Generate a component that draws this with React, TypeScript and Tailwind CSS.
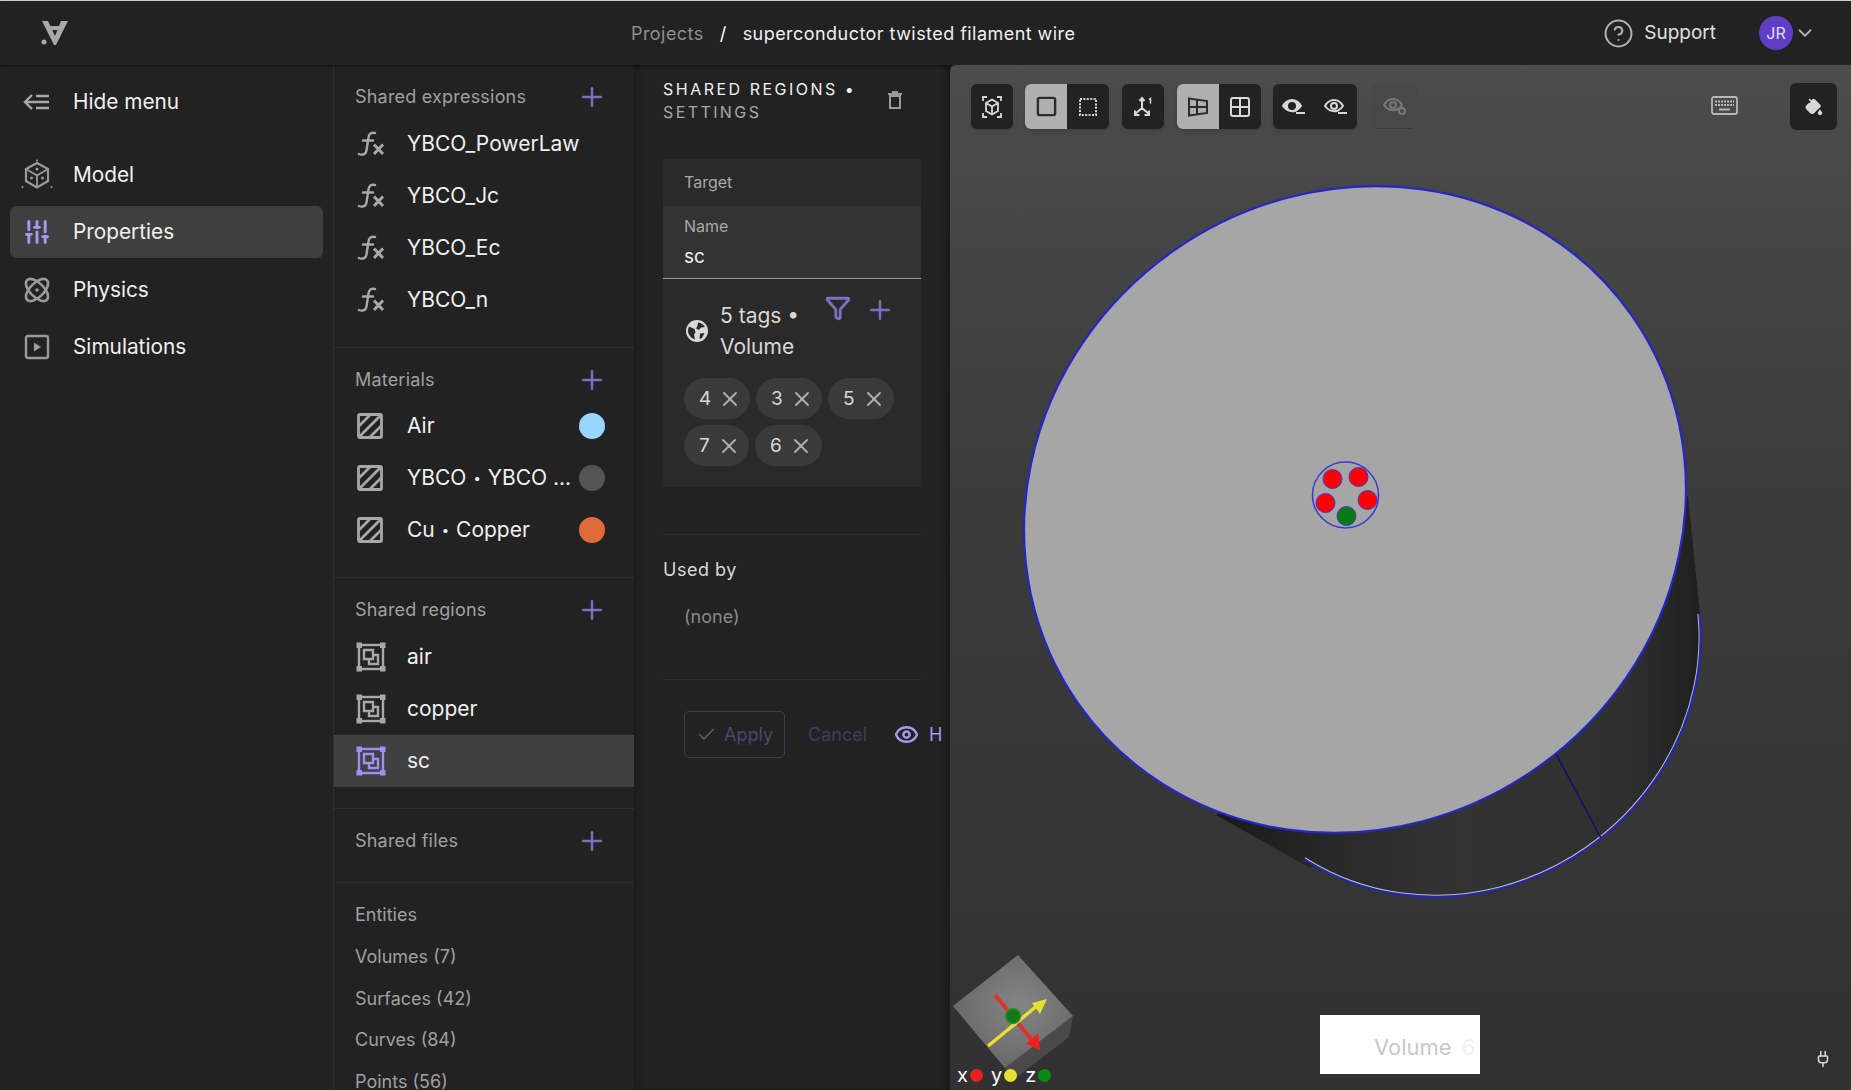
import {
  Check,
  ChevronDown,
  CircleHelp,
  Eye,
  Filter,
  Grid2x2,
  PaintBucket,
  Plug,
  Plus,
  SlidersVertical,
  Square,
  X,
} from "lucide-react";

const expressions = ["YBCO_PowerLaw", "YBCO_Jc", "YBCO_Ec", "YBCO_n"];
const materials = [
  { a: "Air", b: "", color: "bg-[#99d6ff]" },
  { a: "YBCO", b: "YBCO ...", color: "bg-[#555555]" },
  { a: "Cu", b: "Copper", color: "bg-[#e0693a]" },
];
const regions = ["air", "copper", "sc"];
const entities = ["Volumes (7)", "Surfaces (42)", "Curves (84)", "Points (56)"];
const tags = [
  { id: "4", w: "w-[66px]" },
  { id: "3", w: "w-[66px]" },
  { id: "5", w: "w-[66px]" },
  { id: "7", w: "w-[65px]" },
  { id: "6", w: "w-[67px]" },
];

function Logo() {
  return (
    <svg width="28" height="26" viewBox="0 0 28 26" className="block text-[#a8a8a8]" fill="currentColor">
      <path d="M1 1h6l7 15L20 1h7L15 25h-2z" />
      <path d="M7 6h14l-2 4H9z" />
      <circle cx="3" cy="22" r="2.5" />
    </svg>
  );
}

function HideIcon() {
  return (
    <svg width="26" height="20" viewBox="0 0 26 20" fill="none" stroke="#a8a8a8" strokeWidth="2.4">
      <path d="M9 3 2 10l7 7M2 10h24M13 4h13M13 16h13" />
    </svg>
  );
}

function ModelIcon() {
  return (
    <svg width="32" height="32" viewBox="0 0 32 32" fill="none" stroke="#9a9a9a" strokeWidth="2.2">
      <path d="M16 4 27 10v12l-11 6.500L5 22V10z" />
      <path d="M5 10l11 6.500L27 10M16 16.500v12" strokeWidth="1.8" />
      <circle cx="16" cy="1.500" r="1" fill="#9a9a9a" stroke="none" />
      <circle cx="1.500" cy="28" r="1" fill="#9a9a9a" stroke="none" />
      <circle cx="30.500" cy="28" r="1" fill="#9a9a9a" stroke="none" />
      <circle cx="16" cy="10" r="1.500" fill="#9a9a9a" stroke="none" />
      <circle cx="10.500" cy="19" r="1.500" fill="#9a9a9a" stroke="none" />
      <circle cx="21.500" cy="19" r="1.500" fill="#9a9a9a" stroke="none" />
    </svg>
  );
}

function AtomIcon() {
  return (
    <svg width="28" height="28" viewBox="0 0 28 28" fill="none" stroke="#9a9a9a" strokeWidth="2.6">
      <ellipse cx="14" cy="14" rx="14" ry="7" transform="rotate(45 14 14)" />
      <ellipse cx="14" cy="14" rx="14" ry="7" transform="rotate(-45 14 14)" />
      <circle cx="14" cy="14" r="1.800" fill="#9a9a9a" stroke="none" />
    </svg>
  );
}

function PlayBox() {
  return (
    <svg width="26" height="26" viewBox="0 0 26 26" fill="none" stroke="#9a9a9a" strokeWidth="2.4">
      <rect x="2" y="2" width="22" height="22" rx="2" />
      <path d="M10 8.500v9l7-4.500z" fill="#9a9a9a" stroke="none" />
    </svg>
  );
}

function FxIcon() {
  return (
    <svg width="28" height="26" viewBox="0 0 28 26" fill="none" stroke="#a8a8a8" strokeWidth="2.4" strokeLinecap="round">
      <path d="M18 2c-4.500-1-6 1-6.500 4.500L9.500 19.500c-.5 3.500-3.500 5-7.500 3.500" />
      <path d="M6 9.500h10" />
      <path d="M17 13.500l9 9.500M26 13.500l-9 9.500" strokeWidth="3" strokeLinecap="butt" />
    </svg>
  );
}

function HatchIcon() {
  return (
    <svg width="26" height="26" viewBox="0 0 26 26" fill="none" stroke="#a8a8a8" strokeWidth="2.8">
      <rect x="1.500" y="1.500" width="23" height="23" rx="1.500" />
      <path d="M2 13 13 2M3 23 23 3M13 24 24 13" />
    </svg>
  );
}

function RegionIcon({ color }: { color: string }) {
  return (
    <svg width="30" height="30" viewBox="0 0 30 30" fill="none" stroke={color} strokeWidth="2.4">
      <rect x="3" y="3" width="24" height="24" />
      <rect x="0.500" y="0.500" width="5.500" height="5.500" fill={color} stroke="none" />
      <rect x="24" y="0.500" width="5.500" height="5.500" fill={color} stroke="none" />
      <rect x="0.500" y="24" width="5.500" height="5.500" fill={color} stroke="none" />
      <rect x="24" y="24" width="5.500" height="5.500" fill={color} stroke="none" />
      <path d="M8 8h9v9H8zM13 17v5h9v-9h-5" />
    </svg>
  );
}

function GlobeIcon() {
  return (
    <svg width="24" height="24" viewBox="0 0 24 24" className="ml-[1px] mt-[19px] shrink-0">
      <circle cx="12" cy="12" r="11" fill="#d8d8d8" />
      <path d="M4 7.500 9.500 10l1 3.500-1.500 2 1 5C5.500 19 3 15 3 12c0-1.500.300-3 1-4.500z" fill="#2a2a2a" />
      <path d="M13 3.500c3 .300 5.500 2 7 4.500l-4 .500-2 2.500-3-1.500 1.500-2.500z" fill="#2a2a2a" />
      <path d="M15 14.500l4.500-.500-2.500 5-2.500 1z" fill="#2a2a2a" />
    </svg>
  );
}

function TrashIcon() {
  return (
    <svg width="14" height="18" viewBox="0 0 14 18" fill="none" stroke="#9a9a9a" strokeWidth="2">
      <path d="M0 3h14M4 1h6" />
      <rect x="2" y="5" width="10" height="12" />
    </svg>
  );
}

function KeyboardIcon() {
  return (
    <svg width="27" height="19" viewBox="0 0 27 19" fill="none" stroke="#b8b8b8" strokeWidth="1.8">
      <rect x="1" y="1" width="25" height="17" rx="2" />
      <path d="M4 5.500h19M4 9h19" strokeWidth="2.2" strokeDasharray="2 1" />
      <path d="M8 13.500h11" strokeWidth="2" />
    </svg>
  );
}

function ToolButton({ children, active = false, dim = false }: { children: React.ReactNode; active?: boolean; dim?: boolean }) {
  return (
    <div
      className={`flex h-[45px] items-center justify-center ${
        active ? "w-[42px] bg-[#b0b0b0] text-[#2c2c2c]" : dim ? "w-[45px] border-b border-[#3a3a3a] bg-[#484848] text-[#787878]" : "w-[42px] text-[#d8d8d8]"
      }`}
    >
      {children}
    </div>
  );
}

function Cube() {
  return (
    <svg width="20" height="22" viewBox="0 0 20 22" fill="none" stroke="currentColor" strokeWidth="1.8">
      <path d="M10 3.500 16 7v8l-6 3.500L4 15V7zM4 7l6 3.500L16 7M10 10.500v8" />
      <path d="M1 5V1h4M15 1h4v4M1 17v4h4M15 21h4v-4" />
    </svg>
  );
}

function DottedSquare() {
  return (
    <svg width="20" height="20" viewBox="0 0 20 20" fill="none" stroke="currentColor" strokeWidth="2" strokeDasharray="2 1.400">
      <rect x="2" y="2" width="16" height="16" />
    </svg>
  );
}

function Axes() {
  return (
    <svg width="22" height="22" viewBox="0 0 22 22" fill="none" stroke="currentColor" strokeWidth="2">
      <path d="M10 12V3M7.500 5 10 2l2.500 3M10 12l-7 6M3 14.500V19h4.500M10 12l7 6M17 14.500V19h-4.500" />
      <path d="M17 3.500l1.500-1v5" strokeWidth="1.500" />
    </svg>
  );
}

function SplitPanels() {
  return (
    <svg width="20" height="20" viewBox="0 0 20 20" fill="none" stroke="currentColor" strokeWidth="2">
      <path d="M1 1.500l18 2.500v12L1 18.500zM1 10h18M9 2.500v15" />
    </svg>
  );
}

function EyeLine({ filled = false, badge = false }: { filled?: boolean; badge?: boolean }) {
  return (
    <svg width="24" height="20" viewBox="0 0 24 20" fill={filled ? "currentColor" : "none"} stroke="currentColor" strokeWidth="2">
      <path d="M1 9c4.500-8 13.500-8 18 0-1.500 2-3 3.500-5 4.500-5 2-9.500 0-13-4.500z" />
      <circle cx="10" cy="9" r="3" fill={filled ? "#222222" : "none"} stroke={filled ? "#222222" : "currentColor"} />
      {badge ? <circle cx="19" cy="15" r="3" fill="none" /> : <path d="M14 16h9" />}
    </svg>
  );
}

// the wire and the orientation gizmo are a 3D render in the reference
function Viewport3D() {
  const stops = (
    <>
      <stop offset="0" stopColor="#191919" />
      <stop offset="0.3" stopColor="#2c2c2c" />
      <stop offset="0.5" stopColor="#333333" />
      <stop offset="0.85" stopColor="#2f2f2f" />
      <stop offset="1" stopColor="#1f1f1f" />
    </>
  );
  return (
    <svg className="absolute inset-0 h-full w-full" viewBox="0 0 901 1025">
      <defs>
        <linearGradient id="wall" gradientUnits="userSpaceOnUse" x1="266" y1="0" x2="750" y2="0">
          {stops}
        </linearGradient>
        <linearGradient id="rim" gradientUnits="userSpaceOnUse" x1="266" y1="0" x2="750" y2="0" gradientTransform="rotate(35 501 588)">
          {stops}
        </linearGradient>
        <radialGradient id="face" cx="0.55" cy="0.45" r="0.6">
          <stop offset="0" stopColor="#858585" />
          <stop offset="1" stopColor="#666666" />
        </radialGradient>
        <clipPath id="rimArc">
          <rect x="355" y="549" width="546" height="476" />
        </clipPath>
      </defs>
      <ellipse cx="501" cy="588" rx="255" ry="238" transform="rotate(-35 501 588)" fill="url(#rim)" />
      <path d="M266 750 360 803 750 549 738 431z" fill="url(#wall)" />
      <g clipPath="url(#rimArc)">
        <ellipse cx="501" cy="588" rx="255" ry="238" transform="rotate(-35 501 588)" fill="none" stroke="#2222cc" strokeWidth="2" />
        <ellipse cx="501" cy="588" rx="253.500" ry="236.500" transform="rotate(-35 501 588)" fill="none" stroke="#bcbcbc" strokeWidth="1" />
      </g>
      <path d="M605 687 651 773" stroke="#10106a" strokeWidth="1.500" />
      <ellipse cx="405" cy="444.500" rx="338" ry="316" transform="rotate(-35 405 444.500)" fill="#a6a6a6" stroke="#2626c8" strokeWidth="2.2" />
      <g transform="translate(0.5 0)">
        <circle cx="395" cy="430" r="33" fill="#a6a6a6" stroke="#3a3ad0" strokeWidth="1.500" />
        <circle cx="382" cy="414" r="9.500" fill="#ff0000" stroke="#3a3ad0" />
        <circle cx="408" cy="412" r="9.500" fill="#ff0000" stroke="#3a3ad0" />
        <circle cx="375" cy="438" r="9.500" fill="#ff0000" stroke="#3a3ad0" />
        <circle cx="417" cy="435" r="9.500" fill="#ff0000" stroke="#3a3ad0" />
        <circle cx="396" cy="451" r="9.500" fill="#0b7a12" stroke="#3a3ad0" />
      </g>
      <path d="M123 951 119 972 63 1015 55 1003z" fill="#4a4a4a" />
      <path d="M68 890 123 951 55 1003 3 941z" fill="url(#face)" />
      <path d="M45 930 86 980" stroke="#e53030" strokeWidth="4" />
      <path d="M90 985 76 979 88 968z" fill="#f02020" />
      <path d="M38 981 88 940" stroke="#e8e030" strokeWidth="3.500" />
      <path d="M97 934 82 938 90 949z" fill="#e8e030" />
      <circle cx="63" cy="951" r="7.500" fill="#137a1a" stroke="#2f8f35" strokeWidth="1.500" />
    </svg>
  );
}

function SectionHeader({ title, tall = false }: { title: string; tall?: boolean }) {
  return (
    <div className={`flex items-start pl-[21px] pr-[27px] pt-[21px] ${tall ? "h-[53px]" : "h-[52px]"}`}>
      <span className="text-[18px] leading-[22px] tracking-[0.2px] text-[#a0a0a0]">{title}</span>
      <Plus size={30} strokeWidth={2} className="ml-auto mt-[-4px] text-[#7b6fc0]" />
    </div>
  );
}

export default function App() {
  return (
    <div className="flex h-[1090px] w-[1851px] flex-col overflow-hidden bg-[#222222] font-['Inter','Noto_Sans',sans-serif] text-[#e8e8e8]">
      <div className="h-[1px] bg-[#e0e0e0]" />
      <header className="relative flex h-[64px] shrink-0 items-center bg-[#222222] shadow-[0_1px_3px_rgba(0,0,0,0.5)]">
        <div className="ml-[41px]">
          <Logo />
        </div>
        <div className="absolute left-[631px] flex items-center text-[18px] tracking-[0.45px]">
          <span className="text-[#8e8e8e]">Projects</span>
          <span className="mx-[16px] text-white">/</span>
          <span className="text-[#f0f0f0]">superconductor twisted filament wire</span>
        </div>
        <div className="ml-auto flex items-center">
          <CircleHelp size={31} strokeWidth={1.6} className="text-[#b0b0b0]" />
          <span className="ml-[10px] pt-[1px] text-[19px] text-[#e0e0e0]">Support</span>
          <div className="ml-[43px] flex h-[34px] w-[34px] items-center justify-center rounded-full bg-[#5f3dc4] text-[16px] text-[#e4dcff]">JR</div>
          <ChevronDown size={22} className="ml-[1px] mr-[35px] text-[#b0b0b0]" />
        </div>
      </header>

      <div className="flex min-h-0 flex-1">
        <nav className="w-[334px] shrink-0 border-r border-[#303030] px-[10px] text-[20.8px] text-[#f0f0f0]">
          <div className="mt-[11px] flex h-[52px] items-center pl-[13px]">
            <HideIcon />
            <span className="ml-[24px]">Hide menu</span>
          </div>
          <div className="mt-[21px] flex h-[52px] items-center pl-[11px]">
            <ModelIcon />
            <span className="ml-[20px]">Model</span>
          </div>
          <div className="mt-[5px] flex h-[52px] items-center rounded-[6px] bg-[#3f3f3f] pl-[13px]">
            <SlidersVertical size={28} strokeWidth={2.5} className="text-[#a498f0]" />
            <span className="ml-[22px]">Properties</span>
          </div>
          <div className="mt-[6px] flex h-[52px] items-center pl-[13px]">
            <AtomIcon />
            <span className="ml-[22px]">Physics</span>
          </div>
          <div className="mt-[5px] flex h-[52px] items-center pl-[14px]">
            <PlayBox />
            <span className="ml-[23px]">Simulations</span>
          </div>
        </nav>

        <aside className="w-[300px] shrink-0 overflow-hidden text-[21px]">
          <SectionHeader title="Shared expressions" tall />
          {expressions.map((name) => (
            <div key={name} className="flex h-[52px] items-center pl-[23px]">
              <FxIcon />
              <span className="ml-[22px] text-[#f0f0f0]">{name}</span>
            </div>
          ))}
          <div className="mt-[21px] border-t border-[#2f2f2f]" />
          <SectionHeader title="Materials" />
          {materials.map((m) => (
            <div key={m.a} className="flex h-[52px] items-center pl-[23px]">
              <HatchIcon />
              <span className="ml-[24px] w-[164px] shrink-0 whitespace-nowrap text-[#f0f0f0]">
                {m.a}
                {m.b && <span className="mx-[7px] align-[2px] text-[13px]">•</span>}
                {m.b}
              </span>
              <span className={`ml-[8px] h-[26px] w-[26px] shrink-0 rounded-full ${m.color}`} />
            </div>
          ))}
          <div className="mt-[21px] border-t border-[#2f2f2f]" />
          <SectionHeader title="Shared regions" tall />
          {regions.map((name) => (
            <div key={name} className={`flex h-[52px] items-center pl-[22px] ${name === "sc" ? "bg-[#404040]" : ""}`}>
              <RegionIcon color={name === "sc" ? "#9d90f0" : "#a8a8a8"} />
              <span className="ml-[21px] text-[#f0f0f0]">{name}</span>
            </div>
          ))}
          <div className="mt-[21px] border-t border-[#2f2f2f]" />
          <SectionHeader title="Shared files" />
          <div className="mt-[21px] border-t border-[#2f2f2f]" />
          <div className="mt-[10px] pl-[21px] text-[18px] text-[#a0a0a0]">
            <div className="flex h-[43px] items-center">Entities</div>
            {entities.map((e) => (
              <div key={e} className="flex h-[41.5px] items-center">
                {e}
              </div>
            ))}
          </div>
        </aside>

        <section className="relative w-[316px] shrink-0 overflow-hidden pl-[29px] pr-[29px] shadow-[inset_6px_0_6px_-3px_rgba(0,0,0,0.25),inset_-8px_0_6px_-4px_rgba(0,0,0,0.25)]">
          <div className="mt-[13px] flex items-start justify-between pr-[19px]">
            <div className="text-[16px] leading-[23px]">
              <div className="tracking-[2.5px] text-[#f0f0f0]">SHARED REGIONS •</div>
              <div className="tracking-[2.4px] text-[#a8a8a8]">SETTINGS</div>
            </div>
            <div className="mt-[13px]">
              <TrashIcon />
            </div>
          </div>
          <div className="mt-[35px] overflow-hidden rounded-[4px] bg-[#2a2a2a]">
            <div className="flex h-[47px] items-center pb-[2px] pl-[21px] text-[16px] text-[#a8a8a8]">Target</div>
            <div className="h-[73px] border-b border-[#9a9a9a] bg-[#333333] pl-[21px] pt-[10px]">
              <div className="text-[16px] leading-[20px] text-[#a8a8a8]">Name</div>
              <div className="mt-[9px] text-[19px] leading-[24px] text-[#f0f0f0]">sc</div>
            </div>
            <div className="flex items-start pl-[21px] pt-[21px]">
              <GlobeIcon />
              <div className="ml-[11px] w-[105px] text-[21px] leading-[31px] text-[#d8d8d8]">5 tags • Volume</div>
              <Filter size={26} strokeWidth={2.6} className="mt-[-5px] shrink-0 text-[#7b6fc0]" />
              <Plus size={30} strokeWidth={2} className="ml-[14px] mt-[-5px] shrink-0 text-[#7b6fc0]" />
            </div>
            <div className="flex flex-wrap gap-[6px] pb-[21px] pl-[21px] pt-[16px]">
              {tags.map((tag) => (
                <div key={tag.id} className={`flex h-[41px] items-center rounded-full bg-[#3a3a3a] pl-[15px] ${tag.w} text-[19px] text-[#d8d8d8]`}>
                  <span className="pt-[2px]">{tag.id}</span>
                  <X size={24} strokeWidth={1.8} className="ml-[7px] text-[#b0b0b0]" />
                </div>
              ))}
            </div>
          </div>
          <div className="mt-[47px] border-t border-[#2f2f2f]" />
          <div className="mt-[21px] text-[18px] leading-[28px] tracking-[0.5px] text-[#d8d8d8]">Used by</div>
          <div className="mt-[19px] pl-[21px] text-[18px] leading-[28px] text-[#8a8a8a]">(none)</div>
          <div className="mt-[48px] border-t border-[#2f2f2f]" />
          <div className="ml-[21px] mt-[31px] flex w-[300px] items-center text-[18px]">
            <div className="flex h-[47px] w-[101px] shrink-0 items-center justify-center rounded-[5px] border border-[#3d3a58] text-[#4a4770]">
              <Check size={21} className="mr-[7px] text-[#5a5a5a]" />
              Apply
            </div>
            <span className="ml-[23px] text-[#3f3c66]">Cancel</span>
            <Eye size={25} strokeWidth={2.4} className="ml-[27px] shrink-0 text-[#a498f0]" />
            <span className="ml-[10px] text-[#a498f0]">H</span>
          </div>
        </section>

        <main className="relative min-w-0 flex-1 overflow-hidden rounded-tl-[6px] bg-gradient-to-b from-[#4c4c4c] via-[#3c3c3c] via-40% to-[#313131]">
          <Viewport3D />
          <div className="relative flex items-start pl-[21px] pt-[19px]">
            <div className="flex overflow-hidden rounded-[6px] bg-[#222222] shadow-md">
              <ToolButton>
                <Cube />
              </ToolButton>
            </div>
            <div className="ml-[12px] flex overflow-hidden rounded-[6px] bg-[#222222] shadow-md">
              <ToolButton active>
                <Square size={23} strokeWidth={2.5} />
              </ToolButton>
              <ToolButton>
                <DottedSquare />
              </ToolButton>
            </div>
            <div className="ml-[13px] flex overflow-hidden rounded-[6px] bg-[#222222] shadow-md">
              <ToolButton>
                <Axes />
              </ToolButton>
            </div>
            <div className="ml-[13px] flex overflow-hidden rounded-[6px] bg-[#222222] shadow-md">
              <ToolButton active>
                <SplitPanels />
              </ToolButton>
              <ToolButton>
                <Grid2x2 size={24} strokeWidth={2} />
              </ToolButton>
            </div>
            <div className="ml-[12px] flex overflow-hidden rounded-[6px] bg-[#222222] shadow-md">
              <ToolButton>
                <EyeLine filled />
              </ToolButton>
              <ToolButton>
                <EyeLine />
              </ToolButton>
            </div>
            <div className="ml-[15px] flex overflow-hidden rounded-[6px]">
              <ToolButton dim>
                <EyeLine badge />
              </ToolButton>
            </div>
            <div className="absolute left-[761px] top-[31px]">
              <KeyboardIcon />
            </div>
            <div className="absolute left-[840px] top-[18px] flex h-[47px] w-[47px] items-center justify-center rounded-[6px] bg-[#222222] text-[#d8d8d8]">
              <PaintBucket size={18} fill="currentColor" />
            </div>
          </div>
          <div className="absolute left-[370px] top-[950px] flex h-[59px] w-[160px] items-center bg-white pl-[54px] pt-[5px] text-[22px] text-[#c8c8c8]">
            Volume <span className="ml-[10px] text-[#f0f0f0]">6</span>
          </div>
          <div className="absolute bottom-0 left-[7px] flex items-center text-[20px] text-white">
            x<span className="ml-[2px] h-[13px] w-[13px] rounded-full bg-[#e82020]" />
            <span className="ml-[8px]">y</span>
            <span className="ml-[2px] h-[13px] w-[13px] rounded-full bg-[#e8e030]" />
            <span className="ml-[8px]">z</span>
            <span className="ml-[2px] h-[13px] w-[13px] rounded-full bg-[#0a8a10]" />
          </div>
          <Plug size={18} className="absolute bottom-[22px] right-[19px] text-[#d8d8d8]" />
        </main>
      </div>
    </div>
  );
}
